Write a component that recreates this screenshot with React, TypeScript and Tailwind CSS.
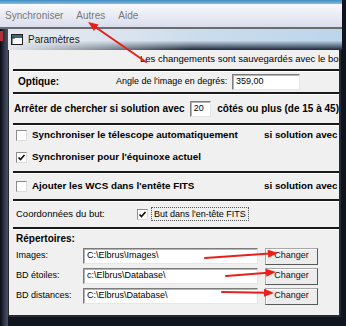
import React from 'react';

type Pt = [number, number];

// red annotation arrow, tail -> tip
function Arrow({ from, to, head = 9, half = 3.5 }: { from: Pt; to: Pt; head?: number; half?: number }) {
  const dx = to[0] - from[0];
  const dy = to[1] - from[1];
  const len = Math.hypot(dx, dy);
  const ux = dx / len;
  const uy = dy / len;
  const bx = to[0] - ux * head;
  const by = to[1] - uy * head;
  const p1 = `${bx - uy * half},${by + ux * half}`;
  const p2 = `${bx + uy * half},${by - ux * half}`;
  return (
    <g>
      <line x1={from[0]} y1={from[1]} x2={bx + ux * 2} y2={by + uy * 2} stroke="#e8201c" strokeWidth={2} strokeLinecap="round" />
      <polygon points={`${to[0]},${to[1]} ${p1} ${p2}`} fill="#e8201c" />
    </g>
  );
}

const Rule = () => <div className="ml-[4px] h-[2px] bg-[#1a1a1a] shadow-[0_1px_0_#ffffff]" />;

function Check({ checked }: { checked?: boolean }) {
  return (
    <span className="flex h-[11px] w-[11px] shrink-0 items-center justify-center border border-t-[#8c8c8c] border-l-[#8c8c8c] border-b-[#dcdcdc] border-r-[#dcdcdc] bg-white">
      {checked && (
        <svg width="9" height="9" viewBox="0 0 9 9">
          <path d="M1.5 4.5 L3.5 6.5 L7.5 2" fill="none" stroke="#111" strokeWidth="1.7" />
        </svg>
      )}
    </span>
  );
}

const inputCls =
  'flex h-[16px] items-center border border-t-[#7c7c7c] border-l-[#7c7c7c] border-b-[#e6e6e6] border-r-[#e6e6e6] bg-white px-[3px] text-[9px] text-black shadow-[inset_1px_1px_0_#b4b4b4]';

function DirRow({ label, value }: { label: string; value: string }) {
  return (
    <div className="flex h-[20px] items-center">
      <span className="w-[74px] pl-[7px] text-[9px] text-black">{label}</span>
      <div className={`${inputCls} w-[175px]`}>{value}</div>
      <button className="ml-[7px] flex h-[17px] w-[53px] items-center justify-center border border-[#a8a8a8] border-b-[#585858] border-r-[#585858] bg-[#ececec] text-[9px] text-[#111] shadow-[inset_1px_1px_0_#ffffff]">
        Changer
      </button>
    </div>
  );
}

export default function App() {
  return (
    <div className="relative h-[326px] w-[346px] overflow-hidden bg-[#10141f] font-['Liberation_Sans',Arial,sans-serif]">
      {/* main window menu */}
      <div className="h-[4px] w-[342px] bg-gradient-to-b from-[#3b8cc2] to-[#86bce0]" />
      <div className="flex h-[23px] w-[342px] items-center gap-[13px] bg-gradient-to-b from-[#f8f9fc] to-[#dadeec] pl-[5px] text-[10px] text-[#777777]">
        <span>Synchroniser</span>
        <span>Autres</span>
        <span>Aide</span>
      </div>
      <div className="h-[2px] w-[342px] bg-[#6c6c6c]" />

      <div className="flex">
        <div className="flex h-[297px] w-[8px] flex-col bg-gradient-to-r from-[#080b14] via-[#2d3444] to-[#4a5262]">
          <div className="mt-[2px] h-[10px] w-[3px] bg-[#b0303a]" />
        </div>
        <div className="flex w-[334px] flex-col">
          {/* dialog title */}
          <div className="flex h-[21px] items-center gap-[5px] bg-[linear-gradient(to_right,#e4e9f0_0%,rgba(228,233,240,0)_55%),linear-gradient(to_bottom,rgba(0,0,0,0)_55%,#1c283a_100%),linear-gradient(to_right,#dfe6ee,#bcd5eb)] pl-[3px] text-[10px] text-[#151515]">
            <svg width="12" height="11" viewBox="0 0 12 11">
              <rect x="0.5" y="0.5" width="11" height="10" fill="#ffffff" stroke="#222" />
              <rect x="1" y="1" width="10" height="3" fill="#3b6d7a" />
              <path d="M1 10 L1 4 L4 4" fill="none" stroke="#222" />
            </svg>
            <span>Paramètres</span>
          </div>

          {/* dialog body */}
          <div className="flex h-[267px] w-[333px] flex-col overflow-hidden border-l border-r-2 border-b-2 border-[#262a33] bg-[#f0f0f0]">
            <div className="flex h-[19px] items-center overflow-hidden whitespace-nowrap pl-[131px] text-[9.5px] text-black">
              Les changements sont sauvegardés avec le bouton OK
            </div>
            <Rule />

            <div className="flex h-[21px] items-center text-black">
              <span className="w-[107px] pl-[9px] text-[10px] font-bold">Optique:</span>
              <span className="w-[116px] text-[9px]">Angle de l'image en degrés:</span>
              <div className={`${inputCls} w-[68px]`}>359,00</div>
            </div>
            <Rule />

            <div className="flex h-[29px] items-center whitespace-nowrap pl-[5px] text-[10px] font-bold text-black">
              <span>Arrêter de chercher si solution avec</span>
              <div className={`${inputCls} ml-[5px] mr-[6px] w-[23px] font-normal`}>20</div>
              <span>côtés ou plus (de 15 à 45)</span>
            </div>
            <Rule />

            <div className="flex h-[46px] flex-col gap-[2px] pl-[7px] text-[9.8px] font-bold text-black">
              <div className="flex h-[20px] items-center">
                <div className="flex w-[248px] items-center gap-[5px]">
                  <Check />
                  <span>Synchroniser le télescope automatiquement</span>
                </div>
                <span className="whitespace-nowrap">si solution avec</span>
              </div>
              <div className="flex h-[20px] items-center gap-[5px]">
                <Check checked />
                <span>Synchroniser pour l'équinoxe actuel</span>
              </div>
            </div>
            <Rule />

            <div className="flex h-[26px] items-center pl-[7px] text-[9.8px] font-bold text-black">
              <div className="flex w-[248px] items-center gap-[5px]">
                <Check />
                <span>Ajouter les WCS dans l'entête FITS</span>
              </div>
              <span className="whitespace-nowrap">si solution avec</span>
            </div>
            <Rule />

            <div className="flex h-[26px] items-center pl-[7px] text-black">
              <span className="w-[121px] text-[9.5px]">Coordonnées du but:</span>
              <Check checked />
              <span className="ml-[3px] border border-dotted border-[#555] px-[2px] text-[9px] leading-[12px]">
                But dans l'en-tête FITS
              </span>
            </div>
            <Rule />

            <div className="flex flex-col pt-[3px]">
              <span className="h-[14px] pl-[7px] text-[10px] font-bold leading-[14px] text-black">Répertoires:</span>
              <DirRow label="Images:" value="C:\Elbrus\Images\" />
              <DirRow label="BD étoiles:" value="c:\Elbrus\Database\" />
              <DirRow label="BD distances:" value="C:\Elbrus\Database\" />
            </div>
          </div>
        </div>
      </div>

      <svg className="pointer-events-none absolute inset-0" width="346" height="326">
        <Arrow from={[146, 62]} to={[88, 22]} head={10} half={4} />
        <Arrow from={[205, 258]} to={[278, 253]} head={10} half={4} />
        <Arrow from={[226, 276]} to={[276, 272]} head={10} half={4} />
        <Arrow from={[222, 292]} to={[274, 293]} head={10} half={4} />
      </svg>
    </div>
  );
}
